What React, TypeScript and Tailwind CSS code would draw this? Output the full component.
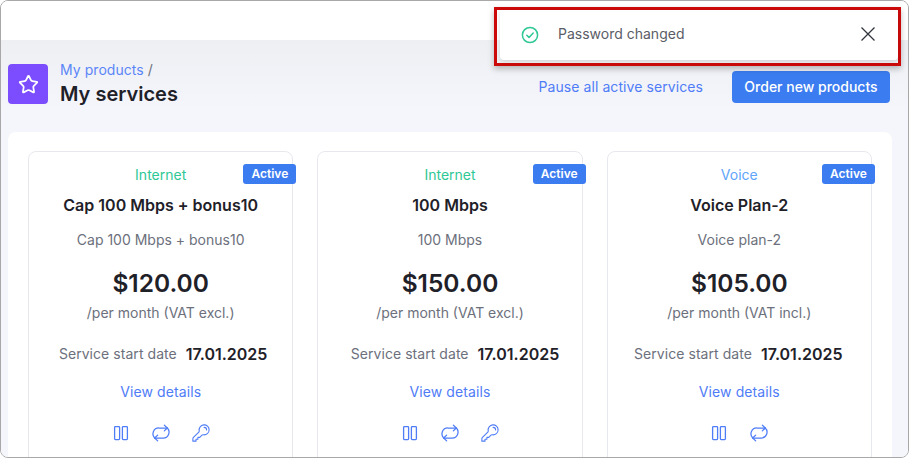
import { Star } from 'lucide-react'
import { HiOutlineKey } from 'react-icons/hi2'

type Service = {
  category: string
  categoryClass: string
  title: string
  subtitle: string
  price: string
  vat: string
  date: string
  dateClass: string
  hasKey: boolean
}

const services: Service[] = [
  {
    category: 'Internet',
    categoryClass: 'text-[#2fc795]',
    title: 'Cap 100 Mbps + bonus10',
    subtitle: 'Cap 100 Mbps + bonus10',
    price: '$120.00',
    vat: '/per month (VAT excl.)',
    date: '17.01.2025',
    dateClass: 'ml-[5px]',
    hasKey: true,
  },
  {
    category: 'Internet',
    categoryClass: 'text-[#2fc795]',
    title: '100 Mbps',
    subtitle: '100 Mbps',
    price: '$150.00',
    vat: '/per month (VAT excl.)',
    date: '17.01.2025',
    dateClass: 'ml-[10px]',
    hasKey: true,
  },
  {
    category: 'Voice',
    categoryClass: 'text-[#60a5fa]',
    title: 'Voice Plan-2',
    subtitle: 'Voice plan-2',
    price: '$105.00',
    vat: '/per month (VAT incl.)',
    date: '17.01.2025',
    dateClass: 'mr-[2px]',
    hasKey: false,
  },
]

const PauseIcon = () => (
  <svg width="20" height="20" viewBox="0 0 20 20" fill="none" stroke="currentColor" strokeWidth="1.3">
    <rect x="3.6" y="3.6" width="5" height="13" rx="0.8" />
    <rect x="11.4" y="3.6" width="5" height="13" rx="0.8" />
  </svg>
)

const RepeatIcon = () => (
  <svg width="20" height="20" viewBox="0 0 24 24" fill="none" stroke="currentColor" strokeWidth="1.5" strokeLinecap="round" strokeLinejoin="round">
    <path d="M16 2.5l3.5 3.5-3.5 3.5" />
    <path d="M19.5 6H9.5a7 7 0 0 0-5 12" />
    <path d="M8 21.5L4.5 18 8 14.5" />
    <path d="M4.5 18h10a7 7 0 0 0 5-12" />
  </svg>
)

const CheckCircleIcon = () => (
  <svg width="18" height="18" viewBox="0 0 18 18" fill="none" stroke="#2fc795" strokeWidth="1.5" strokeLinecap="round" strokeLinejoin="round">
    <circle cx="9" cy="9" r="7.6" />
    <path d="M5.8 9.2l2.2 2.2 4.2-4.4" />
  </svg>
)

const CloseIcon = () => (
  <svg width="16" height="16" viewBox="0 0 16 16" fill="none" stroke="currentColor" strokeWidth="1.3">
    <path d="M1.5 1.5l13 13M14.5 1.5l-13 13" />
  </svg>
)

const ServiceCard = ({ service }: { service: Service }) => (
  <div className="relative flex-1 h-[340px] bg-white border border-[#e7e8ee] rounded-lg flex flex-col items-center">
    <span className="absolute right-[-4px] top-[12px] h-5 w-[53px] rounded-[3px] bg-[#3b7cf0] text-white text-xs font-semibold flex items-center justify-center">
      Active
    </span>
    <p className={`mt-[13px] text-sm leading-5 ${service.categoryClass}`}>{service.category}</p>
    <h3 className="mt-[10px] text-base leading-5 font-semibold text-[#1f2129]">{service.title}</h3>
    <p className="mt-[15px] text-sm leading-5 text-[#6c707c]">{service.subtitle}</p>
    <p className="mt-[17px] text-[24.5px] leading-8 font-semibold text-[#1f2129]">{service.price}</p>
    <p className="mt-[4px] text-sm leading-5 text-[#6c707c]">{service.vat}</p>
    <div className={`mt-[21px] flex items-center gap-[9px] ${service.dateClass}`}>
      <span className="text-sm leading-5 tracking-[0.05px] text-[#6c707c]">Service start date</span>
      <span className="text-base leading-5 font-semibold text-[#1f2129]">{service.date}</span>
    </div>
    <a className="mt-[18px] text-sm leading-5 tracking-[0.1px] text-[#4f7cf7]">View details</a>
    <div className="mt-[21px] flex items-center gap-5 text-[#4f7cf7]">
      <PauseIcon />
      <RepeatIcon />
      {service.hasKey && <HiOutlineKey size={20} strokeWidth={1.3} />}
    </div>
  </div>
)

const App = () => {
  return (
    <div className="relative w-[909px] h-[458px] overflow-hidden bg-white font-['Inter',sans-serif]">
      <div className="h-full border border-[#a8a8a8] rounded-lg overflow-hidden flex flex-col">
        {/* TOP BAR */}
        <div className="h-[39px] shrink-0 bg-white" />

        {/* PAGE */}
        <div className="flex-1 min-h-0 bg-gradient-to-b from-[#eeeff3] to-[#f5f6fb] to-[70px] px-[7px] pt-6">
          <div className="flex items-start h-[68px]">
            <div className="w-10 h-10 rounded-[4px] bg-[#7c4dff] text-white flex items-center justify-center">
              <Star size={21} strokeWidth={2} />
            </div>
            <div className="ml-3 -mt-[4px]">
              <p className="text-sm leading-5 tracking-[0.05px] text-[#5b86f7]">
                My products <span className="text-[#6c707c]">/</span>
              </p>
              <h1 className="text-xl leading-7 font-semibold text-[#1f2129]">My services</h1>
            </div>
            <div className="ml-auto mr-[11px] mt-[7px] flex items-center gap-[29px]">
              <a className="text-sm tracking-[0.08px] text-[#4f7cf7]">Pause all active services</a>
              <button className="w-[158px] h-8 rounded-[4px] bg-[#3b7cf0] text-white text-sm font-medium">
                Order new products
              </button>
            </div>
          </div>

          {/* SERVICES */}
          <div className="w-[884px] h-[400px] bg-white rounded-lg px-5 pt-[19px] flex gap-6">
            {services.map((service, i) => (
              <ServiceCard key={i} service={service} />
            ))}
          </div>
        </div>
      </div>

      {/* TOAST */}
      <div className="absolute left-[494px] top-[7px] w-[407px] h-[59px] border-[3px] border-[#cc0a0a] shadow-[0_3px_6px_rgba(0,0,0,0.25)] pl-[3px]">
        <div className="h-[50px] bg-white rounded-b-[4px] shadow-[0_2px_4px_rgba(0,0,0,0.12)] flex items-center pl-[21px] pr-[22px] pb-[1px]">
          <CheckCircleIcon />
          <span className="ml-[19px] -mt-[1px] text-sm text-[#5a5d66]">Password changed</span>
          <span className="ml-auto flex text-[#33353c] -mt-[1px]"><CloseIcon /></span>
        </div>
      </div>
    </div>
  )
}

export default App
